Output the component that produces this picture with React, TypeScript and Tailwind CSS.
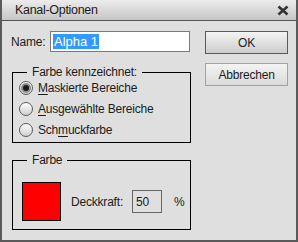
const RADIOS = [
  { pre: "", key: "M", post: "askierte Bereiche", checked: true },
  { pre: "", key: "A", post: "usgewählte Bereiche", checked: false },
  { pre: "Sch", key: "m", post: "uckfarbe", checked: false },
];

function Radio({ checked }: { checked: boolean }) {
  return (
    <span className="flex h-[14px] w-[14px] shrink-0 items-center justify-center rounded-full border border-[#5c5c5c] bg-linear-to-b from-[#ffffff] to-[#cfcfcf]">
      {checked && (
        <span className="h-[6px] w-[6px] rounded-full bg-[#1a1a1a] shadow-[0_0_0_2px_#8f8f8f]" />
      )}
    </span>
  );
}

function GroupLabel({ children }: { children: React.ReactNode }) {
  return (
    <span className="-mt-[8px] ml-[14px] w-fit bg-[#dfdfdf] px-[5px] leading-[15px]">
      {children}
    </span>
  );
}

export default function App() {
  return (
    <div className="flex h-[242px] w-[298px] flex-col border-x-2 border-b-2 border-[#5a5a5a] bg-[#dfdfdf] font-['Liberation_Sans',Arial,sans-serif] text-[12px] tracking-[-0.2px] text-[#1c1c1c]">
      {/* title bar */}
      <div className="flex h-[21px] shrink-0 items-center justify-between border-b border-[#555] bg-linear-to-b from-[#ececec] to-[#c6c6c6] pl-[13px] pr-[7px]">
        <span className="text-[12.5px] tracking-[-0.3px]">Kanal-Optionen</span>
        <svg width="12" height="11" viewBox="0 0 12 11">
          <path d="M1.5 1.5 L10.5 9.5 M10.5 1.5 L1.5 9.5" stroke="#333" strokeWidth="2.6" />
        </svg>
      </div>

      <div className="flex flex-1">
        {/* left column */}
        <div className="flex w-[190px] flex-col pl-[9px] pt-[10px]">
          <div className="flex items-center">
            <span className="w-[39px]">Name:</span>
            <div className="flex h-[21px] w-[140px] items-center border border-[#7a7a7a] bg-white pl-[2px]">
              <span className="bg-[#3399ff] px-[1px] text-[13px] leading-[15px] tracking-normal text-white">
                Alpha 1
              </span>
            </div>
          </div>

          <div className="mt-[20px] ml-[1px] flex h-[71px] w-[179px] flex-col border border-black">
            <GroupLabel>Farbe kennzeichnet:</GroupLabel>
            <div className="mt-[1px] flex flex-col gap-[7px] pl-[6px]">
              {RADIOS.map((r) => (
                <div key={r.post} className="flex h-[14px] items-center gap-[5px]">
                  <Radio checked={r.checked} />
                  <span>
                    {r.pre}
                    <u className="underline-offset-2">{r.key}</u>
                    {r.post}
                  </span>
                </div>
              ))}
            </div>
          </div>

          <div className="mt-[17px] ml-[1px] flex h-[70px] w-[179px] flex-col border border-black">
            <GroupLabel>Farbe</GroupLabel>
            <div className="mt-[14px] flex items-center pl-[9px]">
              <div className="h-[39px] w-[39px] border border-black bg-[#ff0000]" />
              <span className="ml-[10px]">Deckkraft:</span>
              <div className="ml-[9px] flex h-[23px] w-[30px] items-center border border-[#666] pl-[3px]">
                50
              </div>
              <span className="ml-[12px]">%</span>
            </div>
          </div>
        </div>

        {/* buttons */}
        <div className="ml-[13px] flex flex-col gap-[9px] pt-[10px]">
          <button className="h-[23px] w-[83px] border border-[#5a5a5a] bg-linear-to-b from-[#f4f4f4] to-[#cdcdcd] text-[12px]">
            OK
          </button>
          <button className="h-[23px] w-[83px] border border-[#a2a2a2] bg-linear-to-b from-[#f4f4f4] to-[#dadada] text-[12px]">
            Abbrechen
          </button>
        </div>
      </div>
    </div>
  );
}
